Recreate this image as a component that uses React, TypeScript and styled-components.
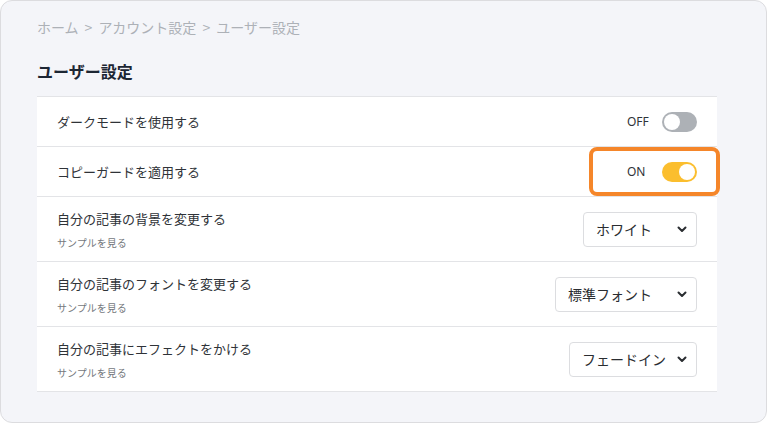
import React from "react";
import styled, { createGlobalStyle } from "styled-components";

const Global = createGlobalStyle`
  html, body { margin: 0; padding: 0; background: #ffffff; }
  body { font-family: "Noto Sans CJK JP", "Noto Sans", sans-serif; }
  * { box-sizing: border-box; }
`;

const Frame = styled.div`
  width: 767px;
  height: 423px;
  border: 1px solid #dcdcdf;
  border-radius: 12px;
  background: #f4f5f9;
  padding: 16px 49px 0 36px;
  display: flex;
  flex-direction: column;
`;

const Breadcrumb = styled.div`
  font-size: 14px;
  line-height: 20px;
  color: #adb1b7;
  display: flex;
  gap: 6px;
`;

const Title = styled.h1`
  margin: 23px 0 0;
  font-size: 16px;
  line-height: 22px;
  font-weight: 700;
  color: #1c2633;
`;

const List = styled.div`
  margin-top: 14px;
  background: #ffffff;
  border-top: 1px solid #e3e4e7;
  display: flex;
  flex-direction: column;
`;

const Row = styled.div<{ $tall?: boolean }>`
  height: ${(p) => (p.$tall ? 65 : 50)}px;
  border-bottom: 1px solid #e3e4e7;
  padding: 0 20px;
  display: flex;
  align-items: center;
  justify-content: space-between;
`;

const Texts = styled.div`
  display: flex;
  flex-direction: column;
  gap: 8px;
`;

const Label = styled.div`
  font-size: 13px;
  line-height: 18px;
  color: #2f3338;
`;

const Sub = styled.div`
  font-size: 10px;
  line-height: 13px;
  color: #74787d;
`;

const ToggleWrap = styled.div`
  position: relative;
  display: flex;
  align-items: center;
  gap: 12px;
`;

const ToggleText = styled.span`
  width: 23px;
  font-family: "Noto Sans", sans-serif;
  font-size: 12px;
  color: #2f3338;
`;

const Track = styled.div<{ $on: boolean }>`
  width: 35px;
  height: 20px;
  border-radius: 10px;
  background: ${(p) => (p.$on ? "#fbbe2e" : "#adb1b6")};
  padding: 2px;
  display: flex;
  justify-content: ${(p) => (p.$on ? "flex-end" : "flex-start")};
`;

const Knob = styled.div`
  width: 16px;
  height: 16px;
  border-radius: 50%;
  background: #ffffff;
`;

const Highlight = styled.div`
  position: absolute;
  left: -38px;
  right: -23px;
  top: -15px;
  bottom: -14px;
  border: 4px solid #f5862a;
  border-radius: 8px;
  pointer-events: none;
`;

const Select = styled.div<{ $w: number }>`
  width: ${(p) => p.$w}px;
  height: 35px;
  border: 1px solid #dcdde0;
  border-radius: 4px;
  padding: 0 9px 0 12px;
  display: flex;
  align-items: center;
  justify-content: space-between;
  font-size: 14px;
  color: #2a2d31;
`;

const Chevron = () => (
  <svg width="10" height="7" viewBox="0 0 10 7">
    <path d="M1.5 1.5 L5 5 L8.5 1.5" fill="none" stroke="#2a2d31" strokeWidth="2" strokeLinecap="round" strokeLinejoin="round" />
  </svg>
);

const Toggle = ({ on, highlight }: { on: boolean; highlight?: boolean }) => (
  <ToggleWrap>
    <ToggleText>{on ? "ON" : "OFF"}</ToggleText>
    <Track $on={on}>
      <Knob />
    </Track>
    {highlight && <Highlight />}
  </ToggleWrap>
);

const selects = [
  { label: "自分の記事の背景を変更する", value: "ホワイト", w: 114 },
  { label: "自分の記事のフォントを変更する", value: "標準フォント", w: 142 },
  { label: "自分の記事にエフェクトをかける", value: "フェードイン", w: 128 },
];

export default function App() {
  return (
    <>
      <Global />
      <Frame>
        <Breadcrumb>
          <span>ホーム</span>
          <span>&gt;</span>
          <span>アカウント設定</span>
          <span>&gt;</span>
          <span>ユーザー設定</span>
        </Breadcrumb>
        <Title>ユーザー設定</Title>
        <List>
          <Row>
            <Label>ダークモードを使用する</Label>
            <Toggle on={false} />
          </Row>
          <Row>
            <Label>コピーガードを適用する</Label>
            <Toggle on highlight />
          </Row>
          {selects.map((s) => (
            <Row $tall key={s.label}>
              <Texts>
                <Label>{s.label}</Label>
                <Sub>サンプルを見る</Sub>
              </Texts>
              <Select $w={s.w}>
                <span>{s.value}</span>
                <Chevron />
              </Select>
            </Row>
          ))}
        </List>
      </Frame>
    </>
  );
}
